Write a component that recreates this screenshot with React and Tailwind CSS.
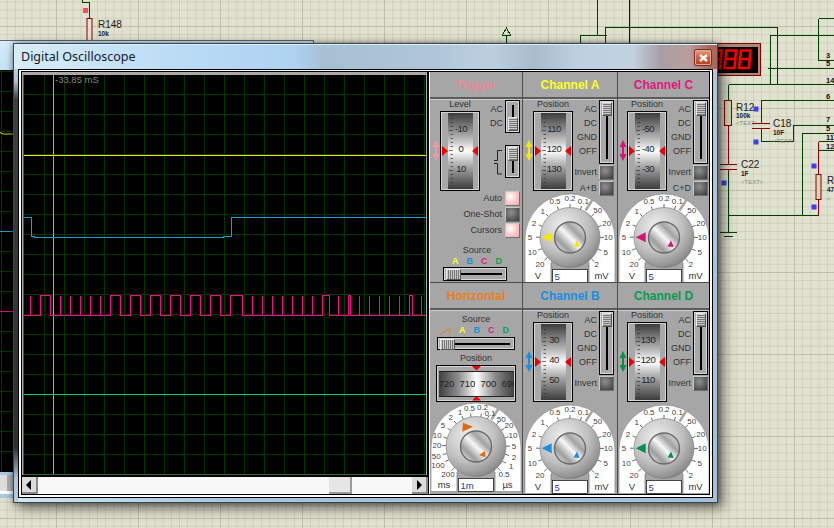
import React from "react";

const Wire = ({ d, c = "#004000", w = 1 }) => <path d={d} stroke={c} strokeWidth={w} fill="none" shapeRendering="crispEdges" />;
const Blue = ({ x, y }) => <rect x={x - 2.5} y={y - 2.5} width="5" height="5" fill="#4040f0" />;
const Lbl = ({ x, y, s, b, g }) => (
  <text x={x} y={y} fontSize={b ? 6.5 : g ? 6 : 10} fontWeight={b ? "bold" : "normal"} fill={g ? "#8a8a80" : "#202020"}>{s}</text>
);

function Schematic() {
  return (
    <svg className="absolute inset-0 block" width="834" height="528">
      <defs>
        <pattern id="minor" width="8.2" height="8.2" x="138" y="26" patternUnits="userSpaceOnUse">
          <path d="M0 0H8.2M0 0V8.2" stroke="#c0c0ae" strokeWidth="1" fill="none" />
        </pattern>
        <pattern id="major" width="82" height="82" x="138" y="26" patternUnits="userSpaceOnUse">
          <path d="M0 0H82M0 0V82" stroke="#bebeaa" strokeWidth="2" fill="none" />
        </pattern>
      </defs>
      <rect width="834" height="528" fill="#e1e1cf" />
      <rect width="834" height="528" fill="url(#minor)" />
      <rect width="834" height="528" fill="url(#major)" />
      <Wire d="M82 0V2.5H89.5V10" />
      <Wire d="M89.5 10V18" c="#8b0000" />
      <rect x="87" y="18.5" width="5" height="26" fill="#e1e1cf" stroke="#8b0000" />
      <rect x="83" y="8" width="5" height="5" fill="#ff5050" />
      <Lbl x="98" y="28" s="R148" />
      <Lbl x="98" y="36" s="10k" b />
      <Wire d="M506.5 43V35M506.5 28L502.5 35H510.5Z" />
      <Wire d="M597.5 0V36M580.5 43V35.5H606.5M605.5 43V27.5H777.5V84.5M728.5 84.5H834M770.5 84V35.5H834M768 68.5H834M818.5 18.5H834M818.5 18.5V60.5H834" />
      <Wire d="M629.5 0V44" c="#0000a0" />
      <Wire d="M728.5 84.5V100" />
      <Wire d="M728.5 125V165M728.5 170V173" c="#8b0000" />
      <rect x="724.5" y="100.5" width="7" height="25" fill="#d8d8b8" stroke="#8b0000" />
      <Wire d="M720 164.5H737M720 169.5H737" c="#8b0000" />
      <Wire d="M728.5 173V232M720 232.5H737M724 236.5H733M728.5 215.5H818.5M802.5 215V133.5H834M793.5 125.5H834M793.5 125V141.5H761.5V128M761.5 123V100.5H834M818.5 150H834" />
      <Wire d="M752 123.5H770M752 128.5H770" c="#8b0000" />
      <Wire d="M818.5 142V174M818.5 199V215" c="#8b0000" />
      <Wire d="M818.5 141.5H834" />
      <rect x="816" y="174.5" width="5" height="25" fill="#d8d8b8" stroke="#8b0000" />
      <Blue x={756} y={109} />
      <Blue x={756} y={142} />
      <Blue x={724} y={183} />
      <Blue x={814} y={166} />
      <Blue x={814} y={207} />
      <Lbl x="736" y="111" s="R12" />
      <Lbl x="736" y="118" s="100k" b />
      <Lbl x="736" y="125" s="<TEXT>" g />
      <Lbl x="773" y="127" s="C18" />
      <Lbl x="773" y="135" s="10F" b />
      <Lbl x="773" y="143" s="<TEXT>" g />
      <Lbl x="741" y="168" s="C22" />
      <Lbl x="741" y="176" s="1F" b />
      <Lbl x="741" y="184" s="<TEXT>" g />
      <Lbl x="827" y="184" s="R" />
      <Lbl x="827" y="192" s="47" b />
      <Lbl x="827" y="201" s="<" g />
      {[["3", 58], ["5", 66], ["14", 83], ["6", 99], ["7", 122], ["5", 131], ["11", 140], ["12", 149]].map(([s, y], i) => (
        <text key={i} x="826" y={y} fontSize="7.5" fontWeight="bold" fill="#111">{s}</text>
      ))}
      <rect x="712.5" y="43.5" width="48" height="32" fill="#a98a78" stroke="#800000" />
      <rect x="712" y="47" width="46" height="26" fill="#0a0000" />
      {[710, 724.5, 739].map((x) => (
        <path key={x} d={`M${x + 2} 50.5H${x + 11.5}L${x + 10} 68H${x}Z M${x + 1} 59H${x + 10.5}`} fill="none" stroke="#ff0000" strokeWidth="2.6" />
      ))}
    </svg>
  );
}

function BackWindow() {
  return (
    <div className="absolute left-0 top-[40px] w-[314px] h-[458px] border-t border-r border-[#5c6a74] bg-[linear-gradient(180deg,#d8ecfa,#bcdcf4_10%,#a8c8e2)]">
      <div className="mt-[29px] h-[402px] bg-black relative overflow-hidden">
        <svg className="absolute inset-0" width="314" height="402">
          <path d="M1.5 0V402M0 1H314M0 21H314M0 41H314M0 61H314M0 81H314M0 101H314M0 121H314M0 141H314M0 161H314M0 181H314M0 201H314M0 221H314M0 241H314M0 261H314M0 281H314M0 301H314M0 321H314M0 341H314M0 361H314M0 381H314" stroke="#003a00" fill="none" shapeRendering="crispEdges" />
          <path d="M0 62.5L3 64H14" stroke="#d8d800" fill="none" />
          <path d="M0 161.5H14" stroke="#1fa0d0" fill="none" />
          <path d="M0 241.5H14" stroke="#e0107a" fill="none" />
        </svg>
      </div>
      <div className="mt-[3px] h-[16px] bg-[#dedede] flex pl-[7px]">
        <div className="w-[7px] h-full bg-[#b0b0b0]" />
      </div>
      <div className="h-[3px] bg-white" />
    </div>
  );
}

function ScopeScreen() {
  const events = [
    [30], [40, 50], [60], [70], [80], [90], [100], [110, 120], [130, 140], [150, 160], [170, 180], [190, 200], [210, 220], [230, 242.5],
    [252.5], [262.5], [272.5], [282.5], [292.5], [302.5], [312.5], [322, 329], [338.5], [348, 350.5], [359.5], [369.5], [379.5], [389.5], [399.5], [409, 412], [421.5],
  ];
  let pink = "M0 240.5";
  events.forEach((e) => {
    const a = e[0] - 24;
    if (e.length === 1) pink += `H${a}V220.5V240.5`;
    else pink += `H${a}V220.5H${e[1] - 24}V240.5`;
  });
  pink += "H402";
  const vs = Array.from({ length: 20 }, (_, i) => `M${20.5 + i * 20} 0V400`).join("");
  const hs = Array.from({ length: 19 }, (_, i) => `M0 ${19.5 + i * 20}H402`).join("");
  return (
    <div className="relative w-[403px] h-[400px] bg-black border-l border-b border-[#2d6b2d] ml-px overflow-hidden">
      <svg className="absolute inset-0 block" width="402" height="400">
        <path d={vs + hs} stroke="#003600" fill="none" shapeRendering="crispEdges" />
        <path d="M29.5 0V400" stroke="#a8a8a8" fill="none" shapeRendering="crispEdges" />
        <path d="M0 80.5H402" stroke="#f0e800" fill="none" shapeRendering="crispEdges" />
        <path d="M0 142.5H7.5V161.5H10V162.5H199V161.5H207.5V142.5H402" stroke="#18a0d8" fill="none" shapeRendering="crispEdges" />
        <path d={pink} stroke="#ec1080" fill="none" shapeRendering="crispEdges" />
        <path d="M0 319.5H402" stroke="#00d070" fill="none" shapeRendering="crispEdges" />
      </svg>
      <div className="absolute left-[31px] top-[-1px] text-[9.5px] leading-[11px] text-[#808890]">-33.85 mS</div>
    </div>
  );
}

function ScrollBar() {
  const btn = "w-[16px] h-full bg-[#dcdcdc] border-r-2 border-b-2 border-[#8a8a8a] flex items-center justify-center";
  return (
    <div className="h-[17px] bg-[#f8f8f8] flex items-stretch ml-0 w-[406px]">
      <div className={btn}>
        <svg width="6" height="10"><path d="M5 0V10L0 5Z" fill="#000" /></svg>
      </div>
      <div className="flex-1 pl-[291px]">
        <div className="w-[23px] h-full bg-[#e6e6e6] border-r-2 border-b-2 border-[#9a9a9a]" />
      </div>
      <div className={btn}>
        <svg width="6" height="10"><path d="M1 0V10L6 5Z" fill="#000" /></svg>
      </div>
    </div>
  );
}

const RedV = ({ cls, pts, w, h }) => (
  <svg className={cls} width={w} height={h}><polygon points={pts} fill="#f00000" /></svg>
);

function Wheel({ labels }) {
  const ticks = Array.from({ length: 19 }, (_, i) => i * 4 + 1);
  return (
    <div className="relative w-[40px] h-[80px] border border-black bg-[#a8a8a8] shadow-[inset_0_0_0_1px_#d4d4d4] flex justify-center pt-[1px]">
      <div className="relative w-[25px] h-[76px] bg-[linear-gradient(180deg,#3c3c3c,#727272_15%,#bcbcbc_35%,#ffffff_50%,#bcbcbc_65%,#727272_85%,#3c3c3c)] flex flex-col items-center pt-[6px] pl-[2px] text-[9.5px] tracking-[-0.5px] text-[#24242c]">
        <svg className="absolute left-0 top-0" width="25" height="76">
          {ticks.map((y) => (
            <path key={y} d={`M${(y - 2) % 20 === 15 ? 1 : 2.5} ${y + 0.5}H5`} stroke="#333" strokeWidth="0.7" />
          ))}
        </svg>
        {labels.map((l) => (
          <div key={l} className="relative h-[20px] leading-[20px]">{l}</div>
        ))}
      </div>
      <RedV cls="absolute left-[1px] top-[34px]" pts="0,0 6,5 0,10" w={6} h={10} />
      <RedV cls="absolute right-[1px] top-[34px]" pts="6,0 0,5 6,10" w={6} h={10} />
    </div>
  );
}

function HWheel() {
  return (
    <div className="relative w-[80px] h-[39px] border border-black bg-[#a8a8a8] shadow-[inset_0_0_0_1px_#d4d4d4] flex justify-center pt-[5px]">
      <div className="w-[75px] h-[26px] border-y border-[#222] bg-[linear-gradient(90deg,#404040,#8a8a8a_25%,#ffffff_50%,#8a8a8a_75%,#404040)] flex justify-between items-center text-[9.5px] text-[#222] overflow-hidden">
        <span>720</span><span>710</span><span>700</span><span className="w-[12px] overflow-hidden">690</span>
      </div>
      <RedV cls="absolute left-[35px] top-[0px]" pts="0,0 9,0 4.5,4.5" w={9} h={5} />
      <RedV cls="absolute left-[35px] bottom-[0px]" pts="0,4.5 9,4.5 4.5,0" w={9} h={5} />
    </div>
  );
}

const Arrow = ({ color, cls }) => (
  <svg className={cls} width="8" height="21">
    <polygon points="4,0 7.5,7 5,7 5,14 7.5,14 4,21 0.5,14 3,14 3,7 0.5,7" fill={color} />
  </svg>
);

function Thumb({ vertical, cls }) {
  return vertical ? (
    <div className={`absolute w-[10px] h-[14px] border border-[#e8e8e8] border-r-[#555] border-b-[#555] bg-[repeating-linear-gradient(180deg,#c8c8c8_0px,#c8c8c8_1px,#787878_1px,#787878_2px)] ${cls}`} />
  ) : (
    <div className={`absolute w-[15px] h-[11px] border border-[#e8e8e8] border-r-[#555] border-b-[#555] bg-[repeating-linear-gradient(90deg,#c8c8c8_0px,#c8c8c8_1px,#787878_1px,#787878_2px)] ${cls}`} />
  );
}

function VSlider({ h, pos }) {
  const heightCls = h === 64 ? "h-[64px]" : "h-[33px]";
  return (
    <div className={`relative w-[15px] ${heightCls} border border-black shadow-[inset_0_0_0_1px_#d8d8d8] bg-[#a8a8a8] flex justify-center py-[4px]`}>
      <div className="w-[2px] h-full bg-black" />
      {pos === "top" ? <Thumb vertical cls="left-[2px] top-[1px]" /> : <Thumb vertical cls="left-[2px] bottom-[1px]" />}
    </div>
  );
}

function HSlider({ cls }) {
  return (
    <div className={`relative h-[14px] border border-black shadow-[inset_0_0_0_1px_#d8d8d8] bg-[#a8a8a8] flex items-center px-[4px] ${cls}`}>
      <div className="h-[2px] w-full bg-black" />
      <Thumb cls="left-[2px] top-[1px]" />
    </div>
  );
}

const Btn = ({ pink }) => (
  <div className={`w-[15px] h-[15px] shrink-0 border border-[#c8c8c8] border-r-[#707070] border-b-[#707070] ${pink ? "bg-[radial-gradient(circle_at_35%_35%,#ffffff,#f8c8c8_55%,#f4a8a8)]" : "bg-[radial-gradient(circle_at_40%_35%,#909090,#383838)]"}`} />
);

function Dial({ id, color, labels, unitL, unitR, value, big, small }) {
  const cx = 46;
  const cy = 45;
  const tick = (x, y) => {
    const a = Math.atan2(y - cy, x - cx);
    const c = Math.cos(a);
    const s = Math.sin(a);
    return `M${cx + 30 * c} ${cy + 30 * s}L${cx + 34 * c} ${cy + 34 * s}`;
  };
  return (
    <svg width="92" height="90" className="block">
      <defs>
        <radialGradient id={`${id}k`} cx="38%" cy="32%" r="78%">
          <stop offset="0%" stopColor="#f0f0f0" />
          <stop offset="55%" stopColor="#c0c0c0" />
          <stop offset="85%" stopColor="#929292" />
          <stop offset="100%" stopColor="#6c6c6c" />
        </radialGradient>
        <linearGradient id={`${id}c`} x1="10%" y1="90%" x2="90%" y2="10%">
          <stop offset="0%" stopColor="#e2e2e2" />
          <stop offset="22%" stopColor="#9c9c9c" />
          <stop offset="50%" stopColor="#f8f8f8" />
          <stop offset="72%" stopColor="#a2a2a2" />
          <stop offset="100%" stopColor="#dedede" />
        </linearGradient>
      </defs>
      <path d="M1 89.5V46A45 45 0 0 1 91 46V89.5Z" fill="#fff" stroke="#8a8a8a" strokeWidth="0.7" />
      <rect x="27" y="66" width="38" height="24" fill="#a6a6a6" />
      <path d="M27 89.5V70M65 89.5V70" stroke="#707070" strokeWidth="0.7" />
      <path d="M61.5 17.5L70 4.5" stroke="#a6a6a6" strokeWidth="2.5" />
      {labels.map(([t, x, y]) => (
        <path key={t + x} d={tick(x, y)} stroke="#444" strokeWidth="0.8" />
      ))}
      <g fontSize="8" fill="#444" textAnchor="middle">
        {labels.map(([t, x, y]) => (
          <text key={t + x} x={x} y={y + 3}>{t}</text>
        ))}
      </g>
      <g fontSize="9.5" fill="#333" textAnchor="middle">
        <text x="14" y="86">{unitL}</text>
        <text x="77.5" y="86">{unitR}</text>
      </g>
      <circle cx="46" cy="44.5" r="30" fill={`url(#${id}k)`} stroke="#777" strokeWidth="0.6" />
      <circle cx="46" cy="44.5" r="15.5" fill={`url(#${id}c)`} stroke="#6a6a6a" strokeWidth="1.4" />
      <polygon points={big} fill={color} />
      <polygon points={small} fill={color} />
      <rect x="28.5" y="76.5" width="35" height="13" fill="#fff" stroke="#222" strokeWidth="0.8" />
      <text x="30.5" y="86.5" fontSize="9.5" fill="#1c3ea8">{value}</text>
    </svg>
  );
}

const chLabels = [
  ["20", 16, 71], ["10", 8.3, 59.3], ["5", 6, 44], ["2", 10, 30], ["1", 18.7, 17.7], ["0.5", 31, 8], ["0.2", 46, 5.3], ["0.1", 59.3, 8.3],
  ["50", 73.7, 17], ["20", 82.7, 30.3], ["10", 84.3, 44.3], ["5", 81.7, 59.3], ["2", 72.7, 71],
];
const hLabels = [
  ["200", 18, 72], ["100", 8, 63], ["50", 6.3, 54], ["20", 7, 43.3], ["10", 7.3, 33.3], ["5", 13, 23.3], ["2", 20.7, 15], ["1", 30, 9.7],
  ["0.5", 39.5, 5.7], ["0.2", 52.5, 5], ["0.1", 60, 10.7], ["50", 71.3, 17.3], ["20", 79, 23.3], ["10", 83, 33.3], ["5", 84, 44], ["2", 84, 54.7], ["1", 81.3, 64], ["0.5", 74, 72],
];
const chBig = "17.7,44.3 27.7,39.3 27.7,49.3";
const chSmall = "49.5,53.5 53,47.5 55.8,54";

function Header({ title, cls }) {
  return (
    <div className="h-[27px] shrink-0 border-b-2 border-b-[#5c5c5c] shadow-[0_1px_0_#cccccc] flex items-center justify-center">
      <span className={`text-[12px] font-bold ${cls}`}>{title}</span>
    </div>
  );
}

function Panel({ title, titleCls, children }) {
  return (
    <div className="bg-[#a6a6a6] flex flex-col overflow-hidden">
      <Header title={title} cls={titleCls} />
      {children}
    </div>
  );
}

function Small({ children, cls = "" }) {
  return <div className={`text-[9px] leading-[11px] text-[#333] ${cls}`}>{children}</div>;
}

function Channel({ title, titleCls, color, labels, tight, plus, id }) {
  return (
    <Panel title={title} titleCls={titleCls}>
      <div className={`h-[94px] flex ${tight ? "pl-px" : "pl-[2px]"}`}>
        <Arrow color={color} cls="mt-[41px] shrink-0 w-[8px]" />
        <div className="w-[40px] shrink-0">
          <Small cls="h-[12px] text-center">Position</Small>
          <Wheel labels={labels} />
        </div>
        <div className="w-[41px] shrink-0 pl-[2px] pt-px flex flex-col">
          <div className="flex justify-end gap-[2px]">
            <div className="pt-[4px] text-right">
              {["AC", "DC", "GND", "OFF"].map((t) => (
                <Small key={t} cls="h-[14px]">{t}</Small>
              ))}
            </div>
            <VSlider h={64} pos="top" />
          </div>
          <div className="flex justify-end items-center gap-[2px] mt-px">
            <Small>Invert</Small>
            <Btn />
          </div>
          {plus && (
            <div className="flex justify-end items-center gap-[2px] mt-px relative z-10">
              <Small>{plus}</Small>
              <Btn />
            </div>
          )}
        </div>
      </div>
      <div className={tight ? "ml-0" : "ml-px"}>
        <Dial id={id} color={color} labels={chLabels} unitL="V" unitR="mV" value="5" big={chBig} small={chSmall} />
      </div>
    </Panel>
  );
}

const Letters = () => (
  <>
    <span className="text-[#ffff20]">A</span>
    <span className="text-[#1e90d8]">B</span>
    <span className="text-[#e01888]">C</span>
    <span className="text-[#10a050]">D</span>
  </>
);

function Trigger() {
  return (
    <Panel title="Trigger" titleCls="text-[#e58a9c]">
      <div className="h-[92px] flex pl-[2px]">
        <Arrow color="#e89aa8" cls="mt-[41px] shrink-0" />
        <div className="w-[40px] shrink-0">
          <Small cls="h-[12px] text-center">Level</Small>
          <Wheel labels={["-10", "0", "10"]} />
        </div>
        <div className="flex-1 flex flex-col items-end pr-[2px] pt-px">
          <div className="flex gap-[2px]">
            <div className="pt-[4px] text-right">
              <Small cls="h-[14px]">AC</Small>
              <Small cls="h-[14px]">DC</Small>
            </div>
            <VSlider h={33} pos="bottom" />
          </div>
          <div className="flex items-center gap-[3px] mt-[12px]">
            <svg width="8" height="26" className="shrink-0">
              <path d="M0 11.5H3.5V1.5H8M0 14.5H3.5V25H8" stroke="#222" fill="none" />
            </svg>
            <VSlider h={33} pos="top" />
          </div>
        </div>
      </div>
      <div className="flex flex-col items-end gap-px pr-[2px] h-[48px]">
        <div className="flex items-center gap-[3px]"><Small>Auto</Small><Btn pink /></div>
        <div className="flex items-center gap-[3px]"><Small>One-Shot</Small><Btn /></div>
        <div className="flex items-center gap-[3px]"><Small>Cursors</Small><Btn pink /></div>
      </div>
      <Small cls="text-center mt-[6px] pl-[2px]">Source</Small>
      <div className="flex justify-between pl-[22px] pr-[20px] text-[9px] leading-[11px] font-bold">
        <Letters />
      </div>
      <HSlider cls="w-[64px] ml-[13px]" />
    </Panel>
  );
}

function Horizontal() {
  return (
    <Panel title="Horizontal" titleCls="text-[#e8801f]">
      <div className="h-[92px] flex flex-col items-center pt-[4px]">
        <Small>Source</Small>
        <div className="flex items-center w-[72px] justify-between text-[9px] leading-[11px] font-bold pr-[3px]">
          <svg width="11" height="8"><path d="M0 7L7 3L10 1V7" stroke="#e8801f" fill="none" /></svg>
          <Letters />
        </div>
        <HSlider cls="w-[78px] mt-[1px]" />
        <Small cls="mt-[3px] mb-[1px]">Position</Small>
        <HWheel />
      </div>
      <Dial
        id="h"
        color="#e06a10"
        labels={hLabels}
        unitL="ms"
        unitR="µs"
        value="1m"
        big="33,20.7 43,24.7 32.3,29.7"
        small="49,53 55,49 55.5,55.5"
      />
    </Panel>
  );
}

export default function App() {
  return (
    <div className="relative w-[834px] h-[528px] overflow-hidden font-['Liberation_Sans',Arial,sans-serif] bg-[#e1e1cf]">
      <Schematic />
      <BackWindow />
      {/* Main floating window */}
      <div className="absolute left-[13px] top-[43px] w-[705px] h-[460px] border border-[#38464f] shadow-[5px_5px_12px_rgba(0,0,0,0.55),0_0_6px_rgba(0,0,0,0.4)] bg-[linear-gradient(180deg,#cfe4f4,#a9c6dc_8%,#3a4046_12%,#2c2f33_88%,#a8c6dc_95%,#b0cde0)] flex flex-col">
        <div className="absolute right-0 top-0 bottom-0 w-[4px] bg-[linear-gradient(180deg,#b4c6d6,#a8c4dc_50%,#a4bfd6)]" />
        <div className="absolute left-[4px] right-0 bottom-0 h-[4px] bg-[linear-gradient(90deg,#d0e4f2,#a8c4dc_30%,#a4bfd6)]" />
        <div className="relative h-[25px] shrink-0 flex items-center pl-[7px] border-t border-[#dff0fb] bg-[linear-gradient(90deg,#d8ecf8,#bcdcf5_22%,#aed2f2_40%,#a8c0d4_44%,#b0c6d8_60%,#bccfdf_68%,#a8bccb_74%,#bdd0e0_80%,#c2d2e0_88%,#a99ea6_92%,#b89e9e_96%,#a86a58_99%)]">
          <span className="font-['Noto_Sans',sans-serif] text-[12.5px] text-[#10202c] leading-none">Digital Oscilloscope</span>
          <div className="absolute right-[5px] top-[4px] w-[18px] h-[17px] rounded-[2px] border border-[#7a3020] shadow-[inset_0_0_0_1px_#e8a890] bg-[linear-gradient(180deg,#e8a088,#d06040_50%,#b83c1c)] flex items-center justify-center">
            <svg width="9" height="8"><path d="M1 1L8 7M8 1L1 7" stroke="#fff" strokeWidth="2.4" /></svg>
          </div>
        </div>
        <div className="relative mx-[4px] w-[695px] h-[429px] border border-black">
          <div className="border-x-2 border-t border-b-2 border-white h-full">
            <div className="border border-black h-full flex bg-[#a6a6a6]">
              <div className="w-[407px] shrink-0 flex flex-col border-r-2 border-black bg-[#a8a8a8]">
                <div className="h-[3px] shrink-0" />
                <ScopeScreen />
                <div className="h-[2px] bg-black shrink-0 -mr-px" />
                <ScrollBar />
              </div>
              <div className="w-px bg-white shrink-0" />
              <div className="grid grid-cols-[92px_94px_91px] grid-rows-[210px_211px] gap-px bg-[#4c4c4c]">
                <Trigger />
                <Channel id="a" title="Channel A" titleCls="text-[#ffff20]" color="#f4e800" labels={["110", "120", "130"]} plus="A+B" />
                <Channel id="c" title="Channel C" titleCls="text-[#e0187f]" color="#d81478" labels={["-50", "-40", "-30"]} plus="C+D" tight />
                <Horizontal />
                <Channel id="b" title="Channel B" titleCls="text-[#1a8fe0]" color="#1a8fe0" labels={["30", "40", "50"]} />
                <Channel id="d" title="Channel D" titleCls="text-[#0a9a50]" color="#08904a" labels={["130", "120", "110"]} tight />
              </div>
            </div>
          </div>
        </div>
      </div>
    </div>
  );
}
